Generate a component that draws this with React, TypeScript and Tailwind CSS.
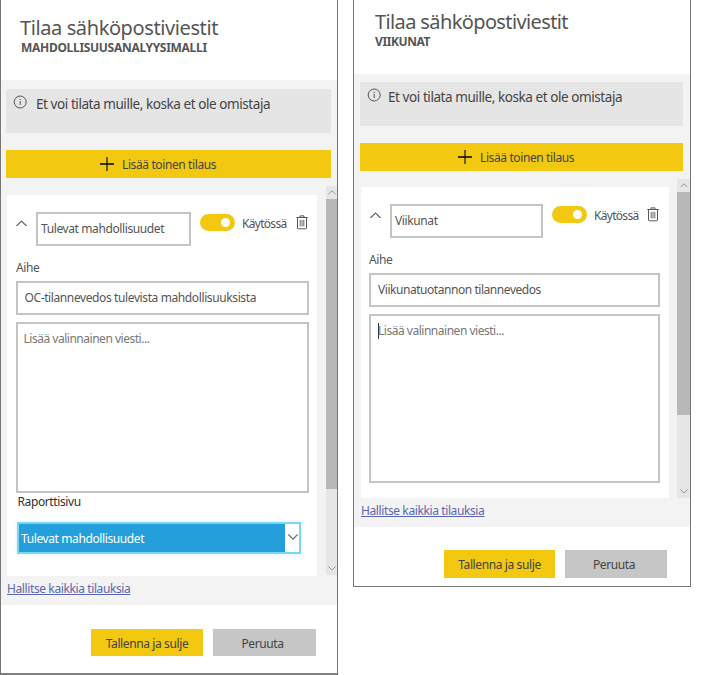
import React from "react";

type IconProps = { className?: string };

const InfoIcon = ({ className = "" }: IconProps) => (
  <svg className={className} width="14" height="14" viewBox="0 0 14 14" fill="none" stroke="#555" strokeWidth="1">
    <circle cx="7.2" cy="7" r="6" />
    <path d="M7.2 6v4M7.2 3.8v1.2" />
  </svg>
);

const PlusIcon = ({ className = "" }: IconProps) => (
  <svg className={className} width="14" height="14" viewBox="0 0 14 14" fill="none" stroke="#111">
    <path d="M0 7h14" strokeWidth="1.6" />
    <path d="M7 0v14" strokeWidth="1.2" />
  </svg>
);

const Chevron = ({ className = "", down = false, size = 11, color = "#666" }: IconProps & { down?: boolean; size?: number; color?: string }) => (
  <svg className={className} width={size} height={size * 0.6} viewBox="0 0 10 6" fill="none" stroke={color} strokeWidth="1.1">
    <path d={down ? "M0.4 0.5L5 5.1L9.6 0.5" : "M0.4 5.5L5 0.9L9.6 5.5"} />
  </svg>
);

const TrashIcon = ({ className = "" }: IconProps) => (
  <svg className={className} width="12" height="15" viewBox="0 0 12 15" fill="none" stroke="#55585c" strokeWidth="1">
    <path d="M0.3 2.5h11.4M4 2.3V0.9h4v1.4M1.5 2.5v10.6q0 .7.7.7h7.6q.7 0 .7-.7V2.5" />
    <path d="M4.2 4.8v6.6M6 4.8v6.6M7.8 4.8v6.6" strokeWidth="0.9" />
  </svg>
);

const Toggle = ({ className = "" }: IconProps) => (
  <div className={`flex h-[17.5px] w-[34.5px] shrink-0 items-center justify-end rounded-full bg-[#f2c811] pr-[4.5px] ${className}`}>
    <div className="size-[9px] rounded-full bg-white" />
  </div>
);

const ScrollBar = ({ className, thumb }: { className: string; thumb: string }) => (
  <div className={`flex shrink-0 flex-col items-center bg-[#e6e6e6] ${className}`}>
    <div className="flex h-[13px] shrink-0 items-center">
      <Chevron size={8} color="#8a8a8a" />
    </div>
    <div className={`w-full bg-[#b8b8b8] ${thumb}`} />
    <div className="mt-auto flex h-[13px] shrink-0 items-center">
      <Chevron size={8} color="#8a8a8a" down />
    </div>
  </div>
);

type PanelProps = {
  frame: string;
  header: string;
  titleClass: string;
  subtitle: string;
  subtitleClass: string;
  body: string;
  notice: string;
  noticeText: string;
  add: string;
  addGap: string;
  scrollArea: string;
  card: string;
  row: string;
  name: string;
  nameInput: string;
  toggle: string;
  trash: string;
  topicLabel: string;
  topic: string;
  topicInput: string;
  message: string;
  caret?: boolean;
  page?: string;
  scroll: string;
  thumb: string;
  link: string;
  footer: string;
  save: string;
  cancel: string;
};

const Panel = (p: PanelProps) => (
  <section className={`flex shrink-0 flex-col border-x border-b border-[#777] bg-white text-[12px] tracking-[-0.39px] ${p.frame}`}>
    <header className={`flex shrink-0 flex-col whitespace-nowrap ${p.header}`}>
      <h1 className={`text-[20px] leading-[23px] font-normal text-[#555] ${p.titleClass}`}>Tilaa sähköpostiviestit</h1>
      <h2 className={`mt-px text-[12px] leading-[16px] font-bold text-[#555] ${p.subtitleClass}`}>{p.subtitle}</h2>
    </header>

    <div className={`flex shrink-0 flex-col bg-[#f3f3f3] ${p.body}`}>
      <div className={`flex h-[44px] shrink-0 items-start bg-[#e5e5e5] ${p.notice}`}>
        <InfoIcon className="mt-[6px] shrink-0" />
        <span className={`mt-[5px] text-[13.5px] leading-[20px] tracking-[-0.43px] whitespace-nowrap text-[#444] ${p.noticeText}`}>
          Et voi tilata muille, koska et ole omistaja
        </span>
      </div>

      <button className={`flex h-[27.5px] shrink-0 items-center bg-[#f2c811] text-[#444] ${p.add}`}>
        <PlusIcon />
        <span className={`mt-[2px] whitespace-nowrap ${p.addGap}`}>Lisää toinen tilaus</span>
      </button>

      <div className={`flex shrink-0 items-start justify-between ${p.scrollArea}`}>
        <div className={`flex flex-col bg-white ${p.card}`}>
          <div className={`flex shrink-0 items-start ${p.row}`}>
            <Chevron className="mt-[8px] shrink-0" size={11} />
            <div className={`flex h-[34px] shrink-0 items-center border-2 border-[#c4c4c4] whitespace-nowrap text-[#555] ${p.nameInput}`}>
              {p.name}
            </div>
            <Toggle className={p.toggle} />
            <span className="mt-[3px] ml-[7.5px] w-[46px] leading-[18px] tracking-[-0.7px] text-[#555]">Käytössä</span>
            <TrashIcon className={p.trash} />
          </div>

          <label className={`shrink-0 leading-[16px] text-[#555] ${p.topicLabel}`}>Aihe</label>
          <div className={`flex h-[34px] shrink-0 items-center border-2 border-[#c4c4c4] whitespace-nowrap text-[#555] ${p.topicInput}`}>
            {p.topic}
          </div>
          <div className={`flex shrink-0 items-start border-2 border-[#c4c4c4] leading-[16px] tracking-[-0.48px] text-[#777] ${p.message}`}>
            {p.caret && <span className="mr-[-1px] h-[16px] w-px shrink-0 bg-[#333]" />}
            Lisää valinnainen viesti...
          </div>

          {p.page && (
            <>
              <label className="ml-[10.5px] leading-[17px] text-[#333]">Raporttisivu</label>
              <div className="mt-[11.5px] ml-[10px] flex h-[32px] w-[284px] border-2 border-[#7ad7f3] bg-white shadow-[0_0_3px_#c5eefa]">
                <div className="flex w-[266px] items-center bg-[#259fdc] pl-[2px] whitespace-nowrap text-white">
                  <span className="mt-[3px]">{p.page}</span>
                </div>
                <Chevron className="mt-[10px] ml-[3px]" size={10} down />
              </div>
            </>
          )}
        </div>
        <ScrollBar className={p.scroll} thumb={p.thumb} />
      </div>

      <a className={`self-start leading-[16px] whitespace-nowrap text-[#5b67ae] underline ${p.link}`}>
        Hallitse kaikkia tilauksia
      </a>
    </div>

    <footer className={`flex flex-1 items-start gap-[10px] text-[#444] ${p.footer}`}>
      <button className={`h-[27.5px] bg-[#f2c811] pt-[3px] ${p.save}`}>Tallenna ja sulje</button>
      <button className={`h-[27.5px] bg-[#c6c6c6] pt-[3px] pr-[4px] ${p.cancel}`}>Peruuta</button>
    </footer>
  </section>
);

export default function App() {
  return (
    <main className="flex h-[675px] w-[701px] items-start gap-[15px] overflow-hidden bg-white font-['Noto_Sans','Open_Sans',sans-serif]">
      <Panel
        frame="h-[675px] w-[338px]"
        header="h-[80px] pt-[16px] pl-[19px]"
        titleClass="tracking-[-0.4px]"
        subtitle="MAHDOLLISUUSANALYYSIMALLI"
        subtitleClass="pl-px tracking-[-0.3px]"
        body="h-[525px] pt-[9px]"
        notice="ml-[5px] w-[325px] pl-[7px]"
        noticeText="ml-[9px]"
        add="mt-[17px] ml-[5px] w-[325px] pl-[94px]"
        addGap="ml-[8px]"
        scrollArea="mt-[8.5px] h-[390px] pl-[6px]"
        card="mt-[8.5px] h-[381.5px] w-[310px]"
        row="h-[51px] pt-[17px] pl-[9px]"
        name="Tulevat mahdollisuudet"
        nameInput="ml-[9px] w-[155px] pl-[3px]"
        toggle="mt-[2px] ml-[9px]"
        trash="mt-[3px] ml-[8px] shrink-0"
        topicLabel="mt-[14px] ml-[9px]"
        topic="OC-tilannevedos tulevista mahdollisuuksista"
        topicInput="mt-[5.5px] ml-[8.5px] w-[293px] pl-[7px]"
        message="mt-[7px] ml-[8.5px] h-[171px] w-[293px] pt-[7px] pl-[6px]"
        page="Tulevat mahdollisuudet"
        scroll="h-[389px] w-[11px]"
        thumb="h-[290px]"
        link="mt-[5px] ml-[6px]"
        footer="border-b border-[#5b8fc0] pt-[23.5px] pl-[90px]"
        save="w-[112px]"
        cancel="w-[103px]"
      />
      <Panel
        frame="h-[587px] w-[338px]"
        header="h-[73.5px] pt-[10px] pl-[21px]"
        titleClass="tracking-[-0.62px]"
        subtitle="VIIKUNAT"
        subtitleClass="tracking-[-0.4px]"
        body="h-[453px] pt-[8.5px]"
        notice="ml-[6px] w-[322.5px] pl-[7px]"
        noticeText="ml-[7px]"
        add="mt-[17px] ml-[6px] w-[322.5px] pl-[98px]"
        addGap="ml-[8px]"
        scrollArea="mt-[8px] h-[319px] pl-[7px]"
        card="mt-[8px] h-[311px] w-[308px]"
        row="h-[51px] pt-[17px] pl-[9px]"
        name="Viikunat"
        nameInput="ml-[9px] w-[153px] pl-[3px]"
        toggle="mt-[2px] ml-[9px]"
        trash="mt-[3px] ml-[7px] shrink-0"
        topicLabel="mt-[14px] ml-[8px]"
        topic="Viikunatuotannon tilannevedos"
        topicInput="mt-[5px] ml-[8px] w-[291px] pt-px pl-[7px] tracking-[-0.45px]"
        message="mt-[7px] ml-[8px] h-[169.5px] w-[291px] pt-[7.5px] pl-[7px]"
        caret
        scroll="h-[319px] w-[13px]"
        thumb="h-[223px]"
        link="mt-[5px] ml-[7px]"
        footer="pt-[23.5px] pl-[90px]"
        save="w-[111px]"
        cancel="w-[102px]"
      />
    </main>
  );
}
